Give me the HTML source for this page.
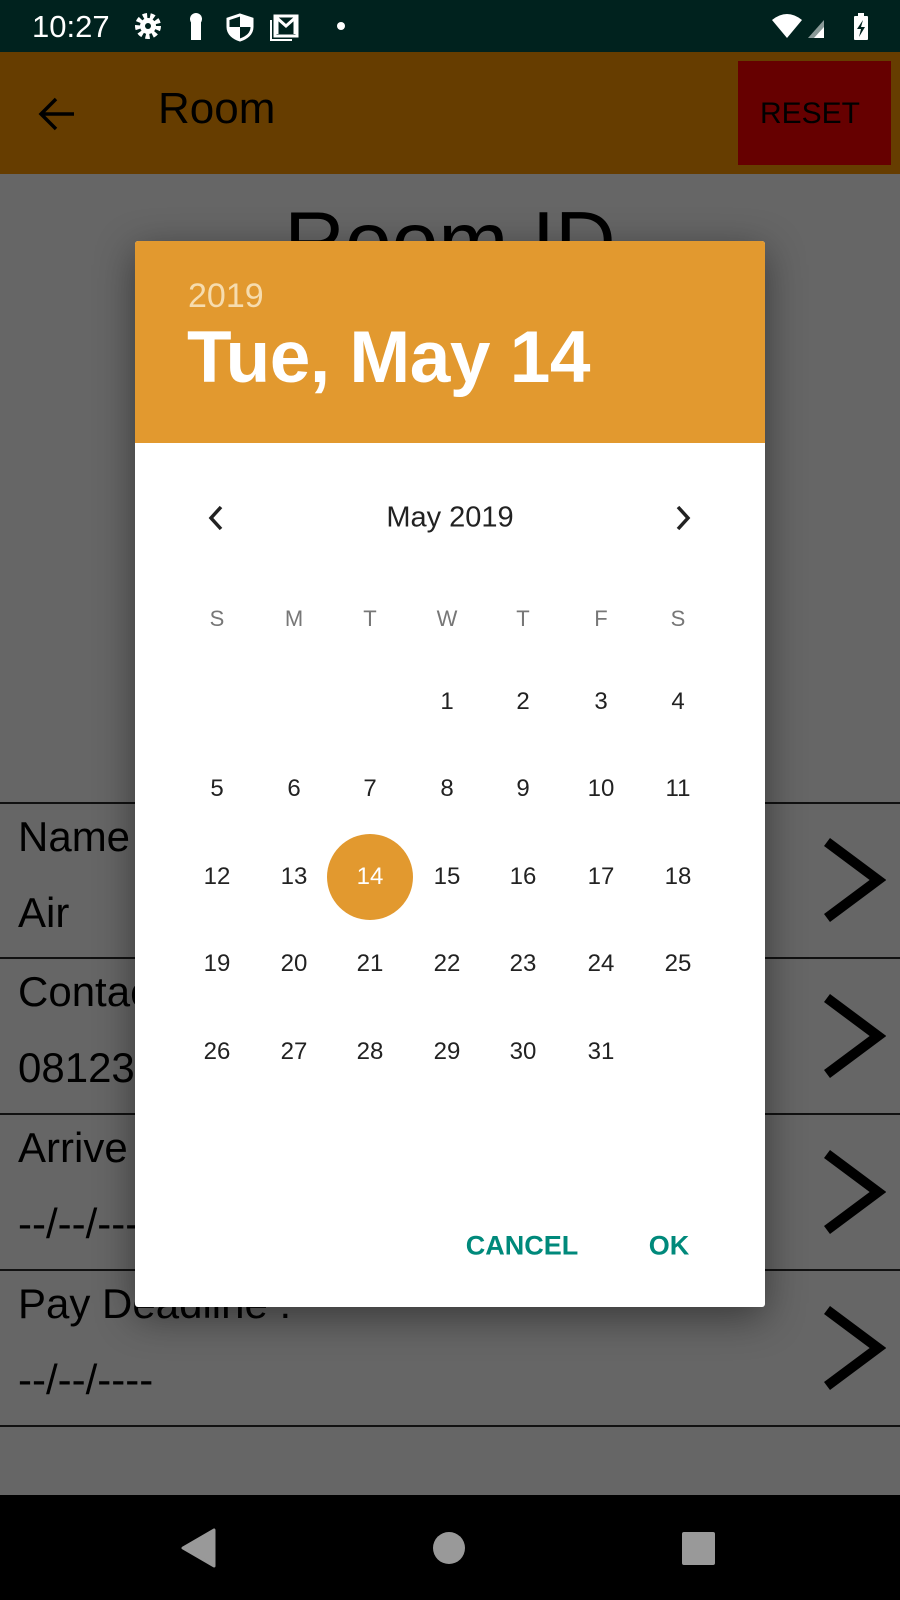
<!DOCTYPE html>
<html><head><meta charset="utf-8"><style>
*{margin:0;padding:0;box-sizing:border-box}
body{width:900px;height:1600px;overflow:hidden;background:#666;font-family:"Liberation Sans",sans-serif;position:relative}
.a{position:absolute}
.c{position:absolute;transform:translate(-50%,-50%);white-space:nowrap}
.line{position:absolute;left:0;width:900px;height:2px;background:#111}
.lt{position:absolute;left:18px;font-size:42px;color:#000}
.d{font-size:24px;color:#222}
.w{font-size:22px;color:#777}
</style></head><body>
<div class="a" style="left:0;top:0;width:900px;height:52px;background:#00221e"></div>
<div class="a" style="left:32px;top:9px;font-size:31px;color:#fff">10:27</div>
<svg class="a" style="left:132px;top:10px" width="220" height="34" viewBox="0 0 220 30">
<circle cx="16" cy="14" r="10" fill="none" stroke="#fff" stroke-width="6" stroke-dasharray="4 3"/><circle cx="16" cy="14" r="8" fill="#fff"/><circle cx="16" cy="14" r="3" fill="#00221e"/>
<circle cx="64" cy="7" r="6" fill="#fff"/><rect x="59" y="9" width="10" height="19" fill="#fff"/>
<path d="M108 3 L120 7 V15 C120 22 114 26 108 28 C102 26 96 22 96 15 V7 Z" fill="none" stroke="#fff" stroke-width="3"/><path d="M108 3 V15 H120 V7 Z M96 15 H108 V28 C102 26 96 22 96 15Z" fill="#fff"/>
<rect x="143" y="4" width="22" height="20" fill="none" stroke="#fff" stroke-width="3"/><path d="M145 22 V6 L154 14 L163 6 V22" fill="none" stroke="#fff" stroke-width="3"/><path d="M139 8 V28 H160" fill="none" stroke="#fff" stroke-width="2"/>
<circle cx="209" cy="14" r="4" fill="#fff"/>
</svg>
<svg class="a" style="left:770px;top:10px" width="110" height="34" viewBox="0 0 110 30">
<path d="M2 8 Q17 -4 32 8 L17 26 Z" fill="#fff"/>
<path d="M38 26 L54 8 V26 Z" fill="#8a9a98"/><path d="M44 26 L54 15 V26Z" fill="#fff"/>
<rect x="84" y="4" width="14" height="24" rx="1" fill="#fff"/><rect x="88" y="1" width="6" height="4" fill="#fff"/><path d="M93 8 L87 17 H91 L89 25 L95 15 H91 Z" fill="#00221e"/>
</svg>
<div class="a" style="left:0;top:52px;width:900px;height:122px;background:#663d00"></div>
<svg class="a" style="left:36px;top:94px" width="42" height="40" viewBox="0 0 42 40"><path d="M38 20 H6 M20 5 L5 20 L20 35" fill="none" stroke="#000" stroke-width="3.5"/></svg>
<div class="a" style="left:158px;top:84px;font-size:44px;color:#000">Room</div>
<div class="a" style="left:738px;top:61px;width:153px;height:104px;background:#660000"></div>
<div class="c" style="left:810px;top:114px;font-size:30px;color:#000">RESET</div>
<div class="c" style="left:450px;top:242px;font-size:84px;color:#000">Room ID</div>

<div class="line" style="top:802px"></div><div class="line" style="top:957px"></div><div class="line" style="top:1113px"></div><div class="line" style="top:1269px"></div><div class="line" style="top:1425px"></div>
<div class="lt" style="top:813px">Name :</div><div class="lt" style="top:889px">Air</div>
<div class="lt" style="top:968px">Contact :</div><div class="lt" style="top:1044px">08123</div>
<div class="lt" style="top:1124px">Arrive :</div><div class="lt" style="top:1200px">--/--/----</div>
<div class="lt" style="top:1280px">Pay Deadline :</div><div class="lt" style="top:1356px">--/--/----</div>
<svg class="a" style="left:822px;top:838px" width="64" height="560" viewBox="0 0 64 560">
<g fill="none" stroke="#000" stroke-width="10"><path d="M5 4 L56 42 L5 80"/><path d="M5 160 L56 198 L5 236"/><path d="M5 316 L56 354 L5 392"/><path d="M5 472 L56 510 L5 548"/></g></svg>

<div class="a" style="left:135px;top:241px;width:630px;height:1066px;background:#fff;border-radius:3px;box-shadow:0 10px 40px rgba(0,0,0,.45);overflow:hidden">
<div style="height:202px;background:#e2992f"></div>
</div>
<div class="a" style="left:188px;top:277px;font-size:34px;color:#f6dcae">2019</div>
<div class="a" style="left:187px;top:316px;font-size:73px;font-weight:bold;color:#fff;letter-spacing:-0.5px">Tue, May 14</div>
<svg class="a" style="left:206px;top:504px" width="20" height="28" viewBox="0 0 20 28"><path d="M15 3 L5 14 L15 25" fill="none" stroke="#222" stroke-width="3.5"/></svg>
<svg class="a" style="left:673px;top:504px" width="20" height="28" viewBox="0 0 20 28"><path d="M5 3 L15 14 L5 25" fill="none" stroke="#222" stroke-width="3.5"/></svg>
<div class="c" style="left:450px;top:518px;font-size:29px;color:#222">May 2019</div>
<div class="a" style="left:327px;top:834px;width:86px;height:86px;border-radius:50%;background:#e2992f"></div>
<div class="c" style="left:522px;top:1246px;font-size:27px;font-weight:bold;color:#00897b">CANCEL</div>
<div class="c" style="left:669px;top:1246px;font-size:27px;font-weight:bold;color:#00897b">OK</div>

<div class="c w" style="left:217px;top:619px">S</div><div class="c w" style="left:294px;top:619px">M</div><div class="c w" style="left:370px;top:619px">T</div><div class="c w" style="left:447px;top:619px">W</div><div class="c w" style="left:523px;top:619px">T</div><div class="c w" style="left:601px;top:619px">F</div><div class="c w" style="left:678px;top:619px">S</div>

<div class="c d" style="left:447px;top:702px">1</div><div class="c d" style="left:523px;top:702px">2</div><div class="c d" style="left:601px;top:702px">3</div><div class="c d" style="left:678px;top:702px">4</div>
<div class="c d" style="left:217px;top:789px">5</div><div class="c d" style="left:294px;top:789px">6</div><div class="c d" style="left:370px;top:789px">7</div><div class="c d" style="left:447px;top:789px">8</div><div class="c d" style="left:523px;top:789px">9</div><div class="c d" style="left:601px;top:789px">10</div><div class="c d" style="left:678px;top:789px">11</div>
<div class="c d" style="left:217px;top:877px">12</div><div class="c d" style="left:294px;top:877px">13</div><div class="c d" style="left:370px;top:877px;color:#fff">14</div><div class="c d" style="left:447px;top:877px">15</div><div class="c d" style="left:523px;top:877px">16</div><div class="c d" style="left:601px;top:877px">17</div><div class="c d" style="left:678px;top:877px">18</div>
<div class="c d" style="left:217px;top:964px">19</div><div class="c d" style="left:294px;top:964px">20</div><div class="c d" style="left:370px;top:964px">21</div><div class="c d" style="left:447px;top:964px">22</div><div class="c d" style="left:523px;top:964px">23</div><div class="c d" style="left:601px;top:964px">24</div><div class="c d" style="left:678px;top:964px">25</div>
<div class="c d" style="left:217px;top:1052px">26</div><div class="c d" style="left:294px;top:1052px">27</div><div class="c d" style="left:370px;top:1052px">28</div><div class="c d" style="left:447px;top:1052px">29</div><div class="c d" style="left:523px;top:1052px">30</div><div class="c d" style="left:601px;top:1052px">31</div>

<div class="a" style="left:0;top:1495px;width:900px;height:105px;background:#000"></div>
<svg class="a" style="left:0;top:1495px" width="900" height="105" viewBox="0 0 900 105">
<path d="M214 35 V71 L183 53 Z" fill="#999" stroke="#999" stroke-width="3" stroke-linejoin="round"/>
<circle cx="449" cy="53" r="16" fill="#999"/>
<rect x="682" y="37" width="33" height="33" rx="2" fill="#999"/>
</svg>
</body></html>
